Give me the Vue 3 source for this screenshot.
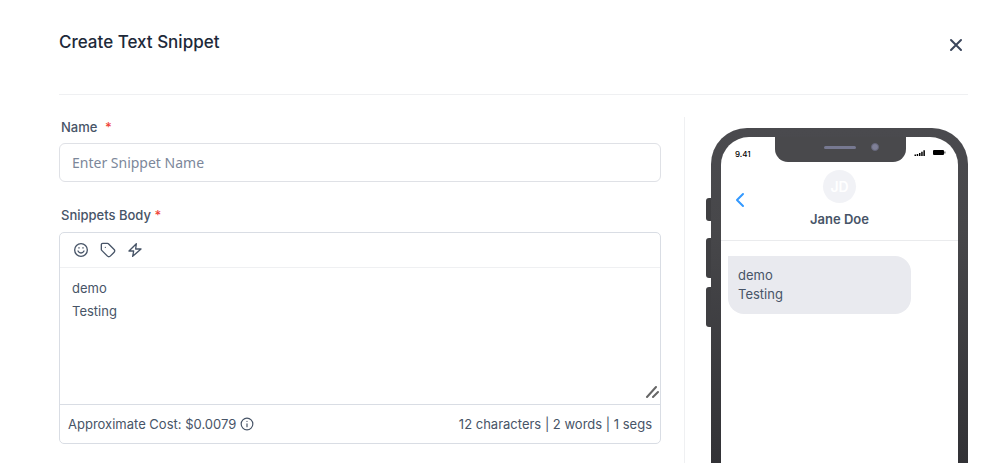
<template>
  <div class="modal">
    <header class="modal-header">
      <h1 class="title">Create Text Snippet</h1>
      <button class="btn-close" type="button" aria-label="Close">
        <svg viewBox="0 0 14 14" width="14" height="14">
          <path d="M2 2l10 10M12 2L2 12" />
        </svg>
      </button>
    </header>

    <main class="content">
      <form class="form" @submit.prevent>
        <label class="label" for="snippet-name">Name <span class="required wide">*</span></label>
        <input id="snippet-name" v-model="name" class="name-input" type="text" placeholder="Enter Snippet Name" />

        <label class="label body-label" for="snippet-body">Snippets Body <span class="required">*</span></label>
        <div class="editor">
          <div class="toolbar">
            <button class="tool" type="button" aria-label="Insert emoji">
              <svg viewBox="0 0 24 24" width="16" height="16">
                <circle cx="12" cy="12" r="9.5" />
                <path d="M7.5 13.5s1.5 3 4.5 3 4.5-3 4.5-3M9 8.5v.6M15 8.5v.6" />
              </svg>
            </button>
            <button class="tool" type="button" aria-label="Insert tag">
              <svg viewBox="0 0 24 24" width="16" height="16">
                <path d="M2 4v7.2c0 .6.2 1 .6 1.4l8.6 8.6c1.2 1.2 3 1.2 4.2 0l5.8-5.8c1.2-1.2 1.2-3 0-4.2l-8.6-8.6c-.4-.4-.8-.6-1.4-.6H4a2 2 0 0 0-2 2z" />
                <path d="M8 8h.01" />
              </svg>
            </button>
            <button class="tool" type="button" aria-label="Insert trigger link">
              <svg viewBox="0 0 24 24" width="16" height="16">
                <path d="M14 2.500L3 13.500h7l-1.500 8L21 10.500h-8z" />
              </svg>
            </button>
          </div>
          <div class="text-wrap">
            <textarea id="snippet-body" v-model="body" class="body-input"></textarea>
            <svg class="grip" viewBox="0 0 14 14" width="14" height="14">
              <path d="M2 12L11 2M8 12l5-5" />
            </svg>
          </div>
          <div class="editor-footer">
            <span class="cost">
              Approximate Cost: $0.0079
              <svg viewBox="0 0 24 24" width="14" height="14">
                <circle cx="12" cy="12" r="10" />
                <path d="M12 16.5V11.5M12 7.5h.01" />
              </svg>
            </span>
            <span>{{ characters }} characters | {{ words }} words | 1 segs</span>
          </div>
        </div>
      </form>

      <aside class="preview">
        <div class="side-buttons">
          <span class="side-button short"></span>
          <span class="side-button"></span>
          <span class="side-button"></span>
        </div>
        <div class="phone">
          <div class="screen">
            <div class="status-bar">
              <span class="clock">9.41</span>
              <div class="notch">
                <span class="speaker"></span>
                <span class="camera"></span>
              </div>
              <span class="signals">
                <svg viewBox="0 0 12 8" width="12" height="8">
                  <path d="M.5 5.5H2V7H.5zM2.7 5h1.5v2H2.7zM5 4h1.5v3H5zM7.2 2.7h1.5V7H7.2zM9.4 1.2h1.5V7H9.4z" />
                </svg>
                <svg viewBox="0 0 14 8" width="14" height="8">
                  <rect x="1" y="1" width="11" height="5" rx="1" />
                  <path d="M12.5 2.5h.8v2h-.8z" />
                </svg>
              </span>
            </div>
            <div class="contact">
              <svg class="back" viewBox="0 0 10 16" width="10" height="16">
                <path d="M8 2L2 8l6 6" />
              </svg>
              <div class="person">
                <span class="avatar">JD</span>
                <span class="person-name">Jane Doe</span>
              </div>
            </div>
            <p class="bubble">{{ body }}</p>
          </div>
        </div>
      </aside>
    </main>
  </div>
</template>

<script setup>
import { computed, ref } from 'vue';

const name = ref('');
const body = ref('demo\nTesting');

const characters = computed(() => body.value.length);
const words = computed(() => body.value.split(/\s+/).filter(Boolean).length);
</script>

<style>
body {
  margin: 0;
  background: #fff;
}
</style>

<style scoped>
.modal {
  display: flex;
  flex-direction: column;
  box-sizing: border-box;
  height: 100vh;
  padding: 0 27px 0 59px;
  overflow: hidden;
  font-family: Inter, "Liberation Sans", sans-serif;
  font-size: 13px;
  color: #475467;
}

button {
  display: flex;
  padding: 0;
  border: 0;
  background: none;
  color: inherit;
  cursor: pointer;
}

svg {
  display: block;
  flex: none;
  fill: none;
  stroke: currentColor;
  stroke-width: 2;
  stroke-linecap: round;
  stroke-linejoin: round;
}

.modal-header {
  display: flex;
  align-items: flex-start;
  justify-content: space-between;
  padding: 31px 5px 41px 0;
  border-bottom: 1px solid #eff0f2;
}

.title {
  margin: 0;
  font-size: 17px;
  font-weight: 500;
  line-height: 22px;
  color: #1d2939;
}

.btn-close {
  padding-top: 7px;
  color: #3b465c;
}

.content {
  display: flex;
  flex: 1;
  min-height: 0;
  padding-top: 22px;
}

.form {
  display: flex;
  flex: 1;
  flex-direction: column;
  min-width: 0;
  padding-right: 23px;
}

.label {
  padding-left: 2px;
  font-weight: 500;
  line-height: 20px;
}

.body-label {
  margin-top: 23px;
}

.required {
  color: #f04438;
}

.required.wide {
  margin-left: 4px;
}

.name-input {
  box-sizing: border-box;
  width: 100%;
  height: 39px;
  margin-top: 6px;
  padding: 0 12px;
  border: 1px solid #dfe1e6;
  border-radius: 6px;
  font-family: "Noto Sans", sans-serif;
  font-size: 14px;
  color: #475467;
}

.name-input::placeholder {
  color: #7c879a;
}

.editor {
  margin-top: 7px;
  border: 1px solid #d9dde4;
  border-radius: 5px;
}

.toolbar {
  display: flex;
  gap: 11px;
  padding: 9px 13px;
  border-bottom: 1px solid #eff0f2;
}

.text-wrap {
  position: relative;
}

.body-input {
  display: block;
  box-sizing: border-box;
  width: 100%;
  height: 136px;
  padding: 9px 12px;
  border: 0;
  outline: 0;
  background: none;
  resize: none;
  font: inherit;
  line-height: 23px;
  color: inherit;
}

.grip {
  position: absolute;
  right: 1px;
  bottom: 5px;
  color: #666;
  pointer-events: none;
}

.editor-footer {
  display: flex;
  justify-content: space-between;
  padding: 8px;
  border-top: 1px solid #d9dde4;
  line-height: 22px;
}

.cost {
  display: flex;
  gap: 4px;
  align-items: center;
}

.preview {
  display: flex;
  flex: none;
  box-sizing: border-box;
  width: 284px;
  padding: 11px 0 0 21px;
  border-left: 1px solid #eff0f2;
}

.side-buttons {
  display: flex;
  flex-direction: column;
  gap: 9px;
  width: 5px;
  padding-top: 70px;
}

.side-button {
  height: 40px;
  border-radius: 3px 0 0 3px;
  background: #3f3f42;
}

.side-button.short {
  height: 23px;
  margin-bottom: 8px;
}

.phone {
  display: flex;
  flex: 1;
  padding: 9px 10px 0;
  border-radius: 36px 36px 0 0;
  background: linear-gradient(#4a4a4e, #47474a 30%, #323236);
}

.screen {
  flex: 1;
  min-width: 0;
  border-radius: 28px 28px 0 0;
  background: #fff;
}

.status-bar {
  display: flex;
  justify-content: space-between;
  height: 25px;
}

.clock,
.signals {
  flex: 1;
  padding-top: 12px;
}

.clock {
  padding-left: 14px;
  font-size: 8px;
  font-weight: 500;
  line-height: 10px;
  color: #000;
}

.notch {
  display: flex;
  flex: none;
  gap: 15px;
  align-items: center;
  justify-content: flex-end;
  box-sizing: border-box;
  width: 131px;
  padding: 0 27px 5px 0;
  border-radius: 0 0 13px 13px;
  background: #49494c;
}

.speaker {
  width: 32px;
  height: 3px;
  border-radius: 2px;
  background: #777991;
}

.camera {
  box-sizing: border-box;
  width: 8px;
  height: 8px;
  border: 1px solid #65667a;
  border-radius: 50%;
  background: #7f8097;
}

.signals {
  display: flex;
  gap: 6px;
  justify-content: flex-end;
  padding-right: 12px;
}

.signals svg {
  fill: #000;
  stroke: none;
}

.contact {
  position: relative;
  padding: 8px 0 11px;
  border-bottom: 1px solid #eaebed;
}

.back {
  position: absolute;
  top: 30px;
  left: 14px;
  color: #3399ff;
}

.person {
  display: flex;
  flex-direction: column;
  gap: 6px;
  align-items: center;
}

.avatar {
  width: 33px;
  border-radius: 50%;
  background: #f1f2f6;
  font-size: 14px;
  font-weight: 600;
  line-height: 33px;
  text-align: center;
  color: #fff;
}

.person-name {
  font-weight: 600;
  line-height: 20px;
}

.bubble {
  box-sizing: border-box;
  width: 183px;
  margin: 15px 0 0 7px;
  padding: 10px;
  border-radius: 0 16px 16px 16px;
  background: #e9eaef;
  line-height: 19px;
  white-space: pre-line;
}
</style>
